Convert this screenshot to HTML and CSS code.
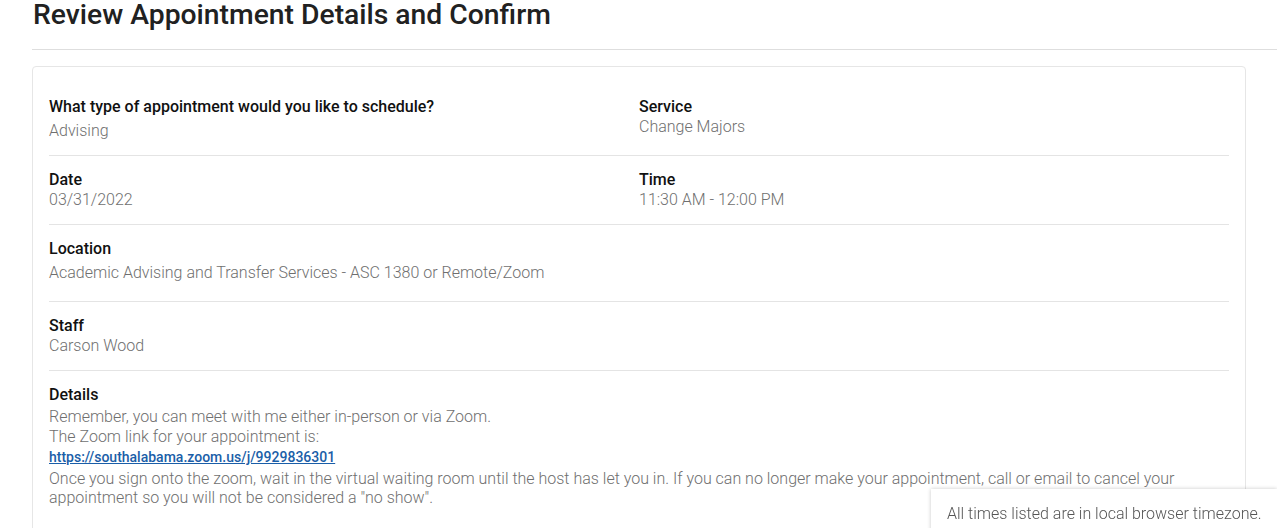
FILE: index.html
```html
<!DOCTYPE html>
<html>
<head>
<meta charset="utf-8">
<link rel="stylesheet" href="styles.css">
</head>
<body>
<div class="page">
  <h1 class="title">Review Appointment Details and Confirm</h1>
  <hr class="rule">
  <div class="card">
    <div class="row row-first">
      <div class="col">
        <div class="label">What type of appointment would you like to schedule?</div>
        <div class="value value-gap">Advising</div>
      </div>
      <div class="col">
        <div class="label">Service</div>
        <div class="value">Change Majors</div>
      </div>
    </div>
    <div class="row">
      <div class="col">
        <div class="label">Date</div>
        <div class="value">03/31/2022</div>
      </div>
      <div class="col">
        <div class="label">Time</div>
        <div class="value">11:30 AM - 12:00 PM</div>
      </div>
    </div>
    <div class="row row-loc">
      <div class="col wide">
        <div class="label">Location</div>
        <div class="value value-gap">Academic Advising and Transfer Services - ASC 1380 or Remote/Zoom</div>
      </div>
    </div>
    <div class="row">
      <div class="col wide">
        <div class="label">Staff</div>
        <div class="value">Carson Wood</div>
      </div>
    </div>
    <div class="row row-last">
      <div class="col wide">
        <div class="label">Details</div>
        <div class="value details">Remember, you can meet with me either in-person or via Zoom.<br>The Zoom link for your appointment is:<br><a class="link" href="#">https://southalabama.zoom.us/j/9929836301</a></div>
        <div class="value details-end">Once you sign onto the zoom, wait in the virtual waiting room until the host has let you in. If you can no longer make your appointment, call or email to cancel your appointment so you will not be considered a "no show".</div>
      </div>
    </div>
  </div>
</div>
<div class="toast">All times listed are in local browser timezone.</div>
</body>
</html>
```

FILE: styles.css
```css
html, body {
  margin: 0;
  padding: 0;
  background: #ffffff;
  font-family: Roboto, "Liberation Sans", Arial, sans-serif;
  overflow: hidden;
}

.page {
  padding-left: 32px;
}

.title {
  margin: -1px 0 19px 1px;
  font-size: 28.3px;
  line-height: 31px;
  font-weight: 500;
  color: #212121;
}

.rule {
  margin: 0;
  border: 0;
  border-top: 1px solid #dedede;
  height: 0;
}

.card {
  margin: 16px 31px 0 0;
  border: 1px solid #e6e6e6;
  border-radius: 4px;
  padding: 0 16px 40px;
}

.row {
  display: flex;
  padding: 14px 0 14px;
  border-bottom: 1px solid #e4e4e4;
}

.row-first {
  padding-top: 30px;
  padding-bottom: 14px;
}

.row-loc {
  padding-bottom: 18px;
}

.row-last {
  border-bottom: 0;
}

.col {
  flex: 0 0 50%;
}

.col.wide {
  flex: 1 1 100%;
}

.label {
  font-size: 16px;
  line-height: 20px;
  font-weight: 500;
  color: #111111;
}

.value {
  font-size: 16px;
  line-height: 20px;
  font-weight: 300;
  color: #6f6f6f;
}

.value-gap {
  margin-top: 4px;
}

.details {
  margin-top: 2px;
}

.details-end {
  margin-top: 2px;
  line-height: 19px;
}

.link {
  font-size: 14px;
  font-weight: 500;
  color: #1a5ea8;
  text-decoration: underline;
}

.toast {
  position: fixed;
  left: 931px;
  right: 0;
  top: 489px;
  bottom: -20px;
  background: #ffffff;
  box-shadow: 0 0 4px rgba(0, 0, 0, 0.22);
  padding: 15px 16px 0;
  font-size: 16px;
  line-height: 20px;
  font-weight: 300;
  color: #555555;
  white-space: nowrap;
  box-sizing: border-box;
}
```
